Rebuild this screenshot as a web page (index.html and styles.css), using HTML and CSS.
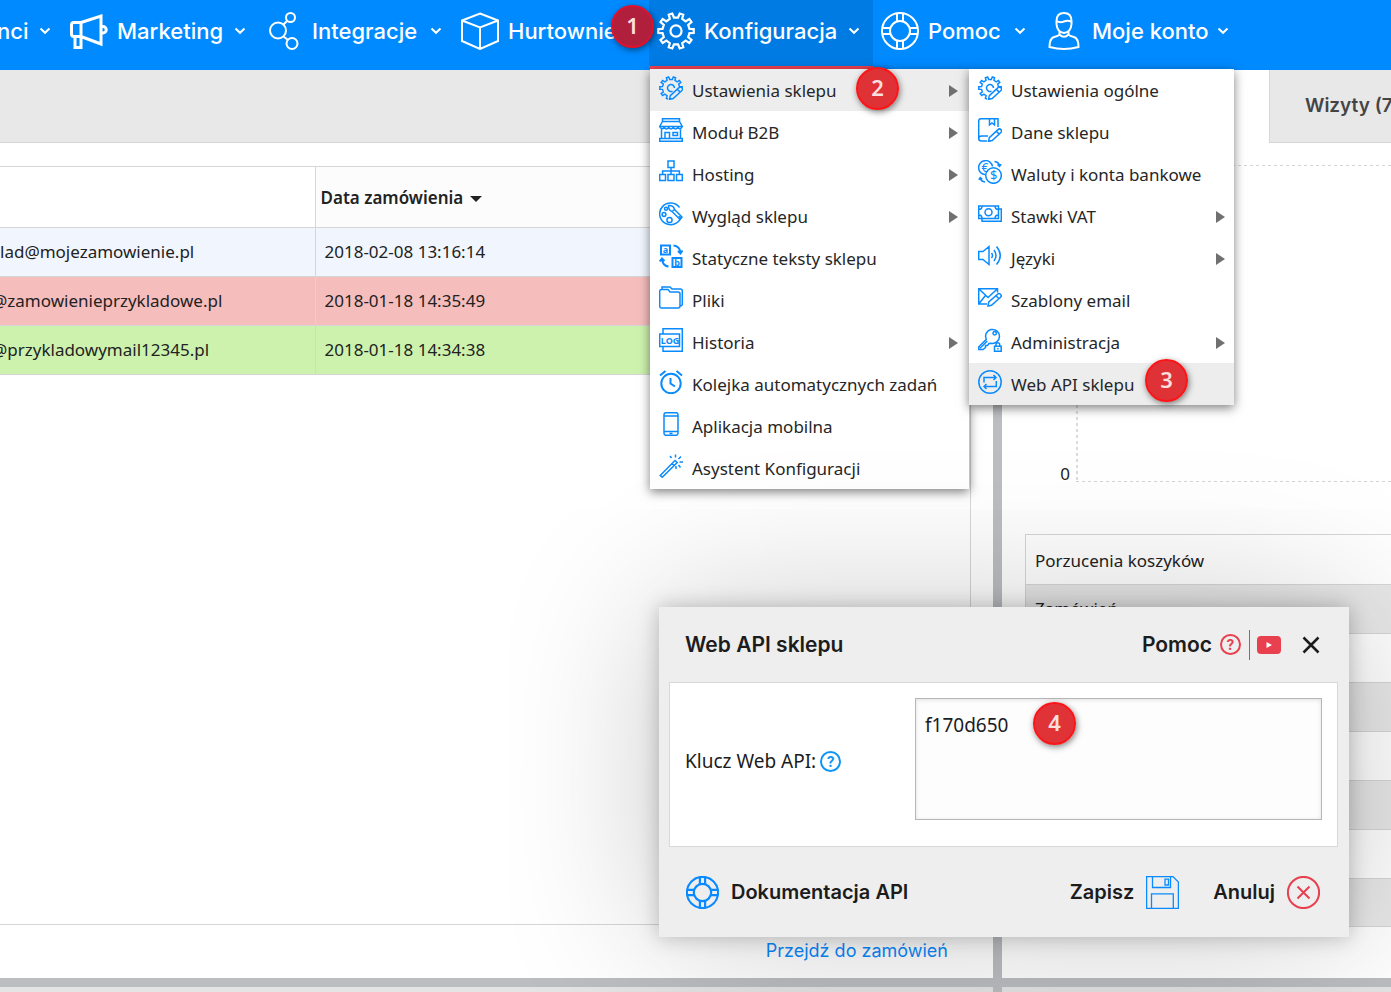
FILE: index.html
```html
<!DOCTYPE html>
<html lang="pl">
<head>
<meta charset="utf-8">
<meta name="viewport" content="width=device-width, initial-scale=1">
<title>Web API sklepu</title>
<link rel="stylesheet" href="styles.css">
</head>
<body>
<svg class="sprite" aria-hidden="true">
  <symbol id="chevron" viewBox="0 0 12 8"><path d="M1.5 1.5 6 5.8 10.500 1.5" stroke-width="2"/></symbol>
  <symbol id="lifebuoy" viewBox="0 0 38 38"><circle cx="19" cy="19" r="18"/><circle cx="19" cy="19" r="10"/><path d="M16 1.500V9.500M22 1.500V9.500M16 28.500V36.500M22 28.500V36.500M1.500 16H9.500M1.500 22H9.500M28.500 16H36.500M28.500 22H36.500"/></symbol>
  <symbol id="gear" viewBox="0 0 24 24"><path d="M13.300 3.500 14.350.950 16.600 1.700 15.900 4.300 18.100 5.900 20.400 4.400 21.800 6.350 19.700 8.100 20.500 10.650 23.200 10.800V13.200L20.500 13.350 19.700 15.900 21.800 17.650 20.400 19.600 18.100 18.100 15.900 19.700 16.600 22.300 14.350 23.050 13.300 20.500H10.700L9.650 23.050 7.400 22.300 8.100 19.700 5.900 18.100 3.600 19.600 2.200 17.650 4.300 15.900 3.500 13.350.800 13.200V10.800L3.500 10.650 4.300 8.100 2.200 6.350 3.600 4.400 5.900 5.900 8.100 4.300 7.400 1.700 9.650.950 10.700 3.500Z"/><circle cx="12" cy="12" r="3.500"/></symbol>
  <symbol id="gear-pen" viewBox="0 0 24 24"><path d="M23.200 11.500V10.800L20.500 10.650 19.700 8.100 21.800 6.350 20.400 4.400 18.100 5.900 15.900 4.300 16.600 1.700 14.350.950 13.300 3.500H10.700L9.650.950 7.400 1.700 8.100 4.300 5.900 5.900 3.600 4.400 2.200 6.350 4.300 8.100 3.500 10.650.800 10.800V13.200L3.500 13.350 4.300 15.900 2.200 17.650 3.600 19.600 5.900 18.100 8.100 19.700 7.400 22.300 9 23"/><path d="M13.500 15.200A3.500 3.500 0 1 1 15.500 12"/><path d="M10.500 23.300 11.300 19.600 20 11.600A1.900 1.900 0 0 1 22.900 14.500L14.200 22.500ZM18.300 13.200 21.200 16.100"/></symbol>
</svg>

<header class="topbar">
  <nav aria-label="Menu główne">
    <ul class="nav">
      <li class="nav-item nav-item--cut"><a class="nav-link" href="#"><span class="nav-label">nci</span><svg class="chev"><use href="#chevron"/></svg></a></li>
      <li class="nav-item nav-item--marketing"><a class="nav-link" href="#">
        <svg class="nav-icon heavy" viewBox="0 0 38 38"><path d="M11 10.500 31 4V32L11 24.500M11 10.500H4Q1.500 10.500 1.500 13V22Q1.500 24.500 4 24.500H11ZM5 24.500H11V35.500H5Z"/><path d="M31 14.500H33A3.200 3.200 0 0 1 33 21H31"/></svg>
        <span class="nav-label">Marketing</span><svg class="chev"><use href="#chevron"/></svg></a></li>
      <li class="nav-item nav-item--integrations"><a class="nav-link" href="#">
        <svg class="nav-icon" viewBox="0 0 38 38"><circle cx="13" cy="18.500" r="8"/><circle cx="25.500" cy="5.500" r="4.500"/><circle cx="27" cy="31.500" r="5.500"/><path d="M18.500 12.500 22.500 8.500M18.500 24.500 23 28"/></svg>
        <span class="nav-label">Integracje</span><svg class="chev"><use href="#chevron"/></svg></a></li>
      <li class="nav-item nav-item--wholesale"><a class="nav-link" href="#">
        <svg class="nav-icon" viewBox="0 0 38 38"><path d="M19 1.500 37 8.500V29L19 37 1 29V8.500ZM1 8.500 19 15.500 37 8.500M19 15.500V37"/></svg>
        <span class="nav-label">Hurtownie</span><svg class="chev"><use href="#chevron"/></svg></a>
        <span class="badge badge--1">1</span></li>
      <li class="nav-item nav-item--config is-open"><a class="nav-link" href="#" aria-expanded="true">
        <svg class="nav-icon gear-big"><use href="#gear"/></svg>
        <span class="nav-label">Konfiguracja</span><svg class="chev"><use href="#chevron"/></svg></a>
        <ul class="menu menu--main">
          <li class="is-active"><a href="#"><svg><use href="#gear-pen"/></svg><span>Ustawienia sklepu</span><i class="more"></i></a>
            <span class="badge badge--2">2</span>
            <ul class="menu menu--sub">
              <li><a href="#"><svg><use href="#gear-pen"/></svg><span>Ustawienia ogólne</span></a></li>
              <li><a href="#"><svg viewBox="0 0 24 24"><path d="M9 23H3.500Q.700 23 .700 20.500V3Q.700.700 3 .700H20V9M.700 20.500Q.700 18 3.500 18H10M11.500.700V7L14 5 16.500 7V.700"/><path d="M10.500 23.300 11.300 19.600 20 11.600A1.900 1.900 0 0 1 22.900 14.500L14.200 22.500ZM18.300 13.200 21.200 16.100"/></svg><span>Dane sklepu</span></a></li>
              <li><a href="#"><svg viewBox="0 0 24 24"><path d="M7.200 14.600A7 7 0 1 1 14.500 6.500M16.500 1.500Q21 2 21.500 6M19.500 4.500 21.500 6.300 23.200 4.200M7 22Q3 21.500 2.300 18M.800 19.800 2.300 17.700 4.300 19.300"/><circle cx="15.500" cy="15.500" r="7.800"/><text x="3.500" y="11.500" font-size="12">€</text><text x="12" y="20" font-size="13">$</text></svg><span>Waluty i konta bankowe</span></a></li>
              <li><a href="#"><svg viewBox="0 0 24 24"><path d="M.700 4H20.500V16.500H.700ZM20.500 7H23.300V19.300H4V16.500M.700 7.500Q4 7.500 4 4M17 4Q17 7.500 20.500 7.500M.700 13Q4 13 4 16.500M17 16.500Q17 13 20.500 13"/><circle cx="10.500" cy="10.200" r="3.500"/></svg><span>Stawki VAT</span><i class="more"></i></a></li>
              <li><a href="#"><svg viewBox="0 0 24 24"><path d="M.700 7.500H5L11 2.500V20.500L5 15.500H.700ZM13.500 9Q15.500 11.500 13.500 14M16 6Q20 11.500 16 17M18.500 2.500Q26 11.500 18.500 20.500"/></svg><span>Języki</span><i class="more"></i></a></li>
              <li><a href="#"><svg viewBox="0 0 24 24"><path d="M9 18H.700V2.800H19.500V6.500M.700 2.800 10 11.500 19.500 2.800M.700 18 7.500 9.500"/><path d="M10 20 10.800 16 19.500 8.300A1.900 1.900 0 0 1 22.500 11.200L13.500 19.200ZM18 9.800 21 12.800"/></svg><span>Szablony email</span></a></li>
              <li><a href="#"><svg viewBox="0 0 24 24"><path d="M8.200 11.500A7 7 0 1 1 12.800 15.200L11 15.500 9.500 17.500H7.500V19.500L5 21.500H.800V18.800Z"/><path d="M2 20.300 9.300 13"/><circle cx="16.700" cy="5.300" r="1.700"/><path d="M16.500 18.300H23.200V23.200H16.500ZM18 18.300V16.500A1.800 1.800 0 0 1 21.700 16.500V18.300M19.900 20V21.500"/></svg><span>Administracja</span><i class="more"></i></a></li>
              <li class="is-active"><a href="#"><svg viewBox="0 0 24 24"><circle cx="12" cy="12" r="11.200"/><path d="M6 12.500V7.500H17.500M15.500 5 18 7.500 15.500 10M18.300 11V16.500H6.500M8.500 14 6 16.500 8.500 19"/></svg><span>Web API sklepu</span></a><span class="badge badge--3">3</span></li>
            </ul>
          </li>
          <li><a href="#"><svg viewBox="0 0 24 24"><path d="M3.500.700H20.500V3.500H3.500ZM3.500 3.500.700 8.500H23.300L20.500 3.500M.700 8.500Q2.500 12.500 5.200 9.500 7.500 12.500 9.700 9.500 12 12.500 14.300 9.500 16.500 12.500 18.800 9.500 21.500 12.500 23.300 8.500M2.500 11.500V20.500M21.500 11.500V20.500M.700 20.500H23.300V23.300H.700ZM6 20.500V14.500H10.500V20.500M14 14.500H18.500V17.500H14Z"/></svg><span>Moduł B2B</span><i class="more"></i></a></li>
          <li><a href="#"><svg viewBox="0 0 24 24"><path d="M9 1H15V7.500H9ZM.700 14.500H6.500V20.500H.700ZM9 14.500H15V20.500H9ZM17.500 14.500H23.300V20.500H17.500ZM12 7.500V14.500M3.600 14.500V11H20.400V14.500"/></svg><span>Hosting</span><i class="more"></i></a></li>
          <li><a href="#"><svg viewBox="0 0 24 24"><path d="M20.500 5.500A11 10.800 0 1 0 22 15.500Q21 15 19.500 14.500"/><path d="M9.500 3.500Q14.500 3 15.500 7.500L13 9.500Q9.500 8.500 9.500 3.500ZM15.500 7.500 23 15 21 17.500 13 9.500"/><circle cx="7" cy="6.800" r="1.500"/><circle cx="5" cy="12.500" r="1.900"/><circle cx="10.500" cy="18" r="2.600"/></svg><span>Wygląd sklepu</span><i class="more"></i></a></li>
          <li><a href="#"><svg class="heavy" viewBox="0 0 24 24"><path d="M2 1.500H11V10.500H2ZM13.500 14H22.500V23H13.500ZM14.500 1.500Q20.500 2 21.500 8.500M19 7 21.500 9.500 23.500 6.500M9.500 22.500Q4 22 3 15.500M.700 17.500 3 14.500 5.500 17"/><text x="3.800" y="9" font-size="9" font-weight="bold">a</text><text x="15.300" y="22" font-size="9" font-weight="bold">b</text></svg><span>Statyczne teksty sklepu</span></a></li>
          <li><a href="#"><svg viewBox="0 0 24 24"><path d="M2.500 3.500H9L11 6H19Q21 6 21 8V20Q21 22 19 22H2.500Q.700 22 .700 20V5.500Q.700 3.500 2.500 3.500ZM3 3.500V1H11L13 3H21.500Q23.300 3 23.300 5V18Q23.300 20 21 20"/></svg><span>Pliki</span></a></li>
          <li><a href="#"><svg viewBox="0 0 24 24"><path d="M4 6V.700H23.300V23.300H4V18.500M.700 6H20.500V18.500H.700Z"/><text x="1.800" y="15.500" font-size="9" font-weight="bold">LOG</text></svg><span>Historia</span><i class="more"></i></a></li>
          <li><a href="#"><svg class="heavy" viewBox="0 0 24 24"><circle cx="12" cy="13.500" r="9.700"/><path d="M11.500 8V13.500L16 16.500M1 5.500 6.500 1M23 5.500 17.500 1"/></svg><span>Kolejka automatycznych zadań</span></a></li>
          <li><a href="#"><svg viewBox="0 0 24 24"><rect x="5" y=".7" width="14" height="22.600" rx="2"/><path d="M5 4H19M5 19.500H19M10.500 21.500H13.500"/></svg><span>Aplikacja mobilna</span></a></li>
          <li><a href="#"><svg viewBox="0 0 24 24"><path d="M1.200 21.500 16 6.500 18.200 8.500 3.300 23.200ZM13 9.500 15.200 11.700M16.500 .500V3.500M11 2 12.500 4M22 2.500 19.500 5M20.500 8H24M19.500 11 21.500 13.500M17 12V15"/></svg><span>Asystent Konfiguracji</span></a></li>
        </ul>
      </li>
      <li class="nav-item nav-item--help"><a class="nav-link" href="#">
        <svg class="nav-icon"><use href="#lifebuoy"/></svg>
        <span class="nav-label">Pomoc</span><svg class="chev"><use href="#chevron"/></svg></a></li>
      <li class="nav-item nav-item--account"><a class="nav-link" href="#">
        <svg class="nav-icon" viewBox="0 0 38 38"><path d="M11.500 9Q11.500 1 19 1T26.500 9V12Q26 20 19 21 12 20 11.500 12ZM11.500 9Q15 11 19 9.500 23 8 26.500 10M14.500 19V22Q14 24 9 25 4.500 26.500 4.500 35 12 37 19 37T33.500 35Q33.500 26.500 29 25 24 24 23.500 22V19M14.500 22.500Q19 27 23.500 22.500"/></svg>
        <span class="nav-label">Moje konto</span><svg class="chev"><use href="#chevron"/></svg></a></li>
    </ul>
  </nav>
</header>

<main class="board">
  <section class="panel orders">
    <div class="strip"></div>
    <div class="orders-frame">
      <table class="orders-table">
        <thead><tr><th class="col-mail"></th><th class="col-date">Data zamówienia <i class="sort"></i></th></tr></thead>
        <tbody>
          <tr class="row-new"><td class="col-mail">lad@mojezamowienie.pl</td><td>2018-02-08 13:16:14</td></tr>
          <tr class="row-cancelled"><td class="col-mail col-mail--cut">@zamowienieprzykladowe.pl</td><td>2018-01-18 14:35:49</td></tr>
          <tr class="row-done"><td class="col-mail col-mail--cut">@przykladowymail12345.pl</td><td>2018-01-18 14:34:38</td></tr>
        </tbody>
      </table>
    </div>
    <div class="orders-more"><a href="#">Przejdź do zamówień</a></div>
  </section>
  <section class="panel stats">
    <button class="stats-tab" type="button">Wizyty (7</button>
    <div class="chart"><span class="axis">0</span><div class="plot"></div></div>
    <table class="stats-table">
      <tbody>
        <tr><td>Porzucenia koszyków</td></tr>
        <tr><td>Zamówień</td></tr>
        <tr><td></td></tr>
        <tr><td></td></tr>
        <tr><td></td></tr>
        <tr><td></td></tr>
        <tr><td></td></tr>
        <tr><td></td></tr>
      </tbody>
    </table>
  </section>
  <div class="next"></div>
  <div class="next"></div>
</main>

<form class="dialog" role="dialog" aria-labelledby="dialog-title">
  <header class="dialog-head">
    <h2 id="dialog-title">Web API sklepu</h2>
    <a class="dialog-help" href="#">Pomoc <span class="question">?</span></a>
    <a class="dialog-video" href="#" aria-label="Film"><svg viewBox="0 0 24 18"><rect width="24" height="18" rx="4"/><path d="M9.500 6 15 9 9.500 12Z"/></svg></a>
    <button class="dialog-close" type="button" aria-label="Zamknij"><svg viewBox="0 0 18 18"><path d="M1.500 1.500 16.500 16.500M16.500 1.500 1.500 16.500"/></svg></button>
  </header>
  <div class="dialog-body">
    <label for="api-key">Klucz Web API: <span class="question question--blue">?</span></label>
    <div class="field"><textarea id="api-key">f170d650</textarea><span class="badge badge--4">4</span></div>
  </div>
  <footer class="dialog-foot">
    <a class="action docs" href="#"><svg class="blue ring" viewBox="0 0 38 38"><use href="#lifebuoy"/></svg>Dokumentacja API</a>
    <button class="action" type="submit">Zapisz<svg class="blue" viewBox="0 0 33 33"><path d="M.600.600H27L32.400 6V32.400H.600ZM6.500.600V11.500H24.500V.600M5.500 32.400V17.800H27.300V32.400M19 3.200H22.500V9H19Z"/></svg></button>
    <button class="action" type="button">Anuluj<svg class="red" viewBox="0 0 33 33"><circle cx="16.500" cy="16.500" r="15.600"/><path d="M10.500 10.500 22.500 22.500M22.500 10.500 10.500 22.500"/></svg></button>
  </footer>
</form>
</body>
</html>
```
FILE: styles.css
```css
* { box-sizing: border-box; }

body {
  margin: 0;
  min-height: 100vh;
  display: flex;
  flex-direction: column;
  overflow-x: hidden;
  background: #e8e8e8;
  color: #222;
  font: 17px/24px "Noto Sans", "Open Sans", sans-serif;
}

ul { margin: 0; padding: 0; list-style: none; }
a { color: inherit; text-decoration: none; }
button { border: 0; background: none; padding: 0; color: inherit; cursor: pointer; }
svg { fill: none; stroke: currentColor; flex: none; }
svg text { fill: currentColor; stroke: none; }
.sprite { position: absolute; width: 0; height: 0; }

/* Top navigation */
.topbar { position: relative; z-index: 2; height: 70px; background: #008aff; color: #fff; }
.nav { display: flex; }
.nav-item { position: relative; flex: none; height: 70px; }
.nav-item--cut { width: 62px; }
.nav-item--marketing { width: 195px; }
.nav-item--integrations { width: 196px; }
.nav-item--wholesale { width: 196px; z-index: 1; }
.nav-item--config { width: 224px; }
.nav-item--help { width: 164px; }
.nav-item--account { width: 203px; }
.nav-link {
  display: flex;
  align-items: center;
  height: 62px;
  padding: 0 11px 0 8px;
  font: 500 22px/30px Inter, sans-serif;
}
.nav-item--cut .nav-link { padding-left: 0; text-indent: -3px; }
.nav-icon { width: 38px; height: 38px; margin-right: 9px; stroke-width: 2; }
.nav-icon.heavy { stroke-width: 3; }
.nav-icon.gear-big { stroke-width: 1.4; }
.nav-label { flex: 1; white-space: nowrap; }
.chev { width: 12px; height: 8px; }
.nav-item.is-open { height: 69px; background: #007be4; border-bottom: 3px solid #ef4151; }
.is-open > .nav-link { padding-right: 13px; }

/* Drop-down menus */
.menu {
  position: absolute;
  background: #fff;
  box-shadow: 0 3px 10px rgba(0, 0, 0, .5);
  color: #262626;
  font-size: 17px;
}
.menu--main { top: 69px; left: 1px; width: 319px; }
.menu--sub { top: 0; left: 100%; width: 265px; }
.menu li { position: relative; }
.menu li.is-active { background: #ededed; }
.menu li a { display: flex; align-items: center; height: 42px; padding: 1px 11px 0 9px; gap: 9px; white-space: nowrap; }
.menu a span { flex: 1; }
.menu svg { width: 24px; height: 24px; margin-bottom: 5px; color: #0a8aff; stroke-width: 1.5; }
.menu svg.heavy { stroke-width: 2; }
.more { border: 6px solid transparent; border-left: 9px solid #707070; border-right: 0; }
.menu--sub .more { margin-right: -2px; }

/* Numbered step markers */
.badge {
  position: absolute;
  z-index: 3;
  width: 43px;
  height: 43px;
  border: 2px solid #fb1518;
  border-radius: 50%;
  background: rgba(222, 38, 42, .94);
  box-shadow: 1px 2px 6px rgba(0, 0, 0, .5);
  color: #fbdede;
  font: 600 22px/36px "Noto Sans", sans-serif;
  text-align: center;
}
.badge--1 { left: 158px; top: 5px; border-color: #e3102a; background: #b01f3b; }
.badge--2 { left: 206px; top: -2px; }
.badge--3 { left: 176px; top: -4px; }
.badge--4 { left: 118px; top: 4px; }

/* Dashboard */
.board {
  flex: 1;
  display: grid;
  grid-template-columns: minmax(0, 993fr) minmax(0, 389fr);
  grid-template-rows: 1fr 5px;
  gap: 9px;
  background: #bbbdc1;
}
.panel { display: flex; flex-direction: column; background: #fff; overflow: hidden; }
.next { background: #e4e4e4; }
.strip { height: 73px; background: #e8e8e8; border-bottom: 1px solid #d6d6d6; }

.orders-frame { flex: 1; margin: 23px 22px 0 0; border: 1px solid #d6d6d6; border-left: 0; }
.orders-table { width: 100%; border-collapse: collapse; table-layout: fixed; }
.orders-table th { height: 60px; padding: 2px 5px 0; text-align: left; font-size: 17px; font-weight: 600; }
.orders-table td { height: 49px; padding: 0 9px; white-space: nowrap; }
.orders-table tr { border-bottom: 1px solid #d6d6d6; }
.orders-table .col-mail { width: 315px; padding-left: 0; border-right: 1px solid #d6d6d6; }
.orders-table .col-mail--cut { text-indent: -8px; }
.col-date { background: #fcfcfc; }
.sort { display: inline-block; margin: 0 0 2px 2px; border: 6px solid transparent; border-top-color: #222; border-bottom: 0; }
.row-new { background: #f1f6fe; }
.row-cancelled { background: #f6bdbd; }
.row-done { background: #cdf2ad; }
.orders-more { padding: 14px 45px 15px; text-align: right; color: #0a8aff; font: 18px/24px Inter, sans-serif; }

.stats-tab {
  height: 73px;
  margin-left: 267px;
  padding-left: 35px;
  border: 1px solid #d6d6d6;
  border-width: 0 0 1px 1px;
  background: #e8e8e8;
  color: #444;
  font: 600 19px/28px Inter, sans-serif;
  text-align: left;
  white-space: nowrap;
}
.chart { display: flex; align-items: flex-end; height: 317px; margin-top: 22px; }
.axis { width: 74px; padding-right: 6px; text-align: right; line-height: 16px; }
.plot {
  flex: 1;
  height: 100%;
  background:
    repeating-linear-gradient(90deg, #d4d4d4 0 3px, transparent 3px 6px) top / 100% 1px no-repeat,
    repeating-linear-gradient(90deg, #d4d4d4 0 3px, transparent 3px 6px) bottom / 100% 1px no-repeat,
    repeating-linear-gradient(#dcdcdc 0 3px, transparent 3px 6px) left / 2px 100% no-repeat;
}
.stats-table { margin: 52px 0 0 23px; border: 1px solid #d6d6d6; border-right: 0; border-collapse: collapse; }
.stats-table td { height: 49px; padding: 0 9px; border-bottom: 1px solid #d6d6d6; }
.stats-table tr:first-child td { height: 50px; padding-top: 2px; }
.stats-table tr:nth-child(even) { background: #e8e8e8; }
.stats-table tr:last-child td { height: 48px; }

/* Web API dialog */
.dialog {
  position: absolute;
  z-index: 3;
  top: 607px;
  right: 42px;
  width: 690px;
  padding: 0 11px 0 10px;
  background: #eee;
  box-shadow: 0 0 20px rgba(0, 0, 0, .24), 0 0 160px rgba(0, 0, 0, .22);
  color: #1c1c1c;
}
.dialog-head { display: flex; align-items: center; height: 75px; padding: 0 18px 0 16px; font: 600 21px/30px Inter, sans-serif; }
.dialog-head h2 { flex: 1; margin: 0; font: inherit; }
.dialog-help { display: flex; align-items: center; gap: 8px; padding-right: 8px; border-right: 1px solid #e8404f; }
.question {
  display: inline-block;
  width: 21px;
  height: 21px;
  border: 2px solid #e8404f;
  border-radius: 50%;
  color: #e8404f;
  font: 700 14px/17px Inter, sans-serif;
  text-align: center;
}
.question--blue { border-color: #0f96f5; color: #0f96f5; }
.dialog-video { display: flex; margin: 0 21px 0 7px; }
.dialog-video svg { width: 24px; height: 18px; fill: #e8404f; stroke: none; }
.dialog-video path { fill: #fff; }
.dialog-close { display: flex; }
.dialog-close svg { width: 18px; height: 18px; stroke-width: 2.500; }
.dialog-body {
  display: grid;
  grid-template-columns: 230px 1fr;
  align-items: center;
  padding: 15px 15px 26px;
  border: 1px solid #d8d8d8;
  background: #fff;
  font-size: 19px;
}
.dialog-body label { display: flex; align-items: center; gap: 4px; padding-top: 4px; }
.field { position: relative; }
textarea {
  display: block;
  width: 100%;
  height: 122px;
  padding: 12px 9px;
  border: 1px solid #b6b6b6;
  background: #fdfdfd;
  box-shadow: inset 0 1px 4px rgba(0, 0, 0, .12);
  color: inherit;
  font: 19px/28px "Noto Sans", "Open Sans", sans-serif;
  resize: none;
}
.dialog-foot { display: flex; align-items: center; gap: 34px; height: 90px; padding: 0 18px 0 17px; }
.action { display: flex; align-items: center; gap: 12px; font: 600 20px/28px Inter, sans-serif; }
.docs { margin-right: auto; }
.action svg { width: 33px; height: 33px; stroke-width: 1.300; }
.action svg.ring { stroke-width: 2.500; }
.blue { color: #0a8aff; }
.red { color: #e8404f; }
.action svg.red { stroke-width: 2; }
```
